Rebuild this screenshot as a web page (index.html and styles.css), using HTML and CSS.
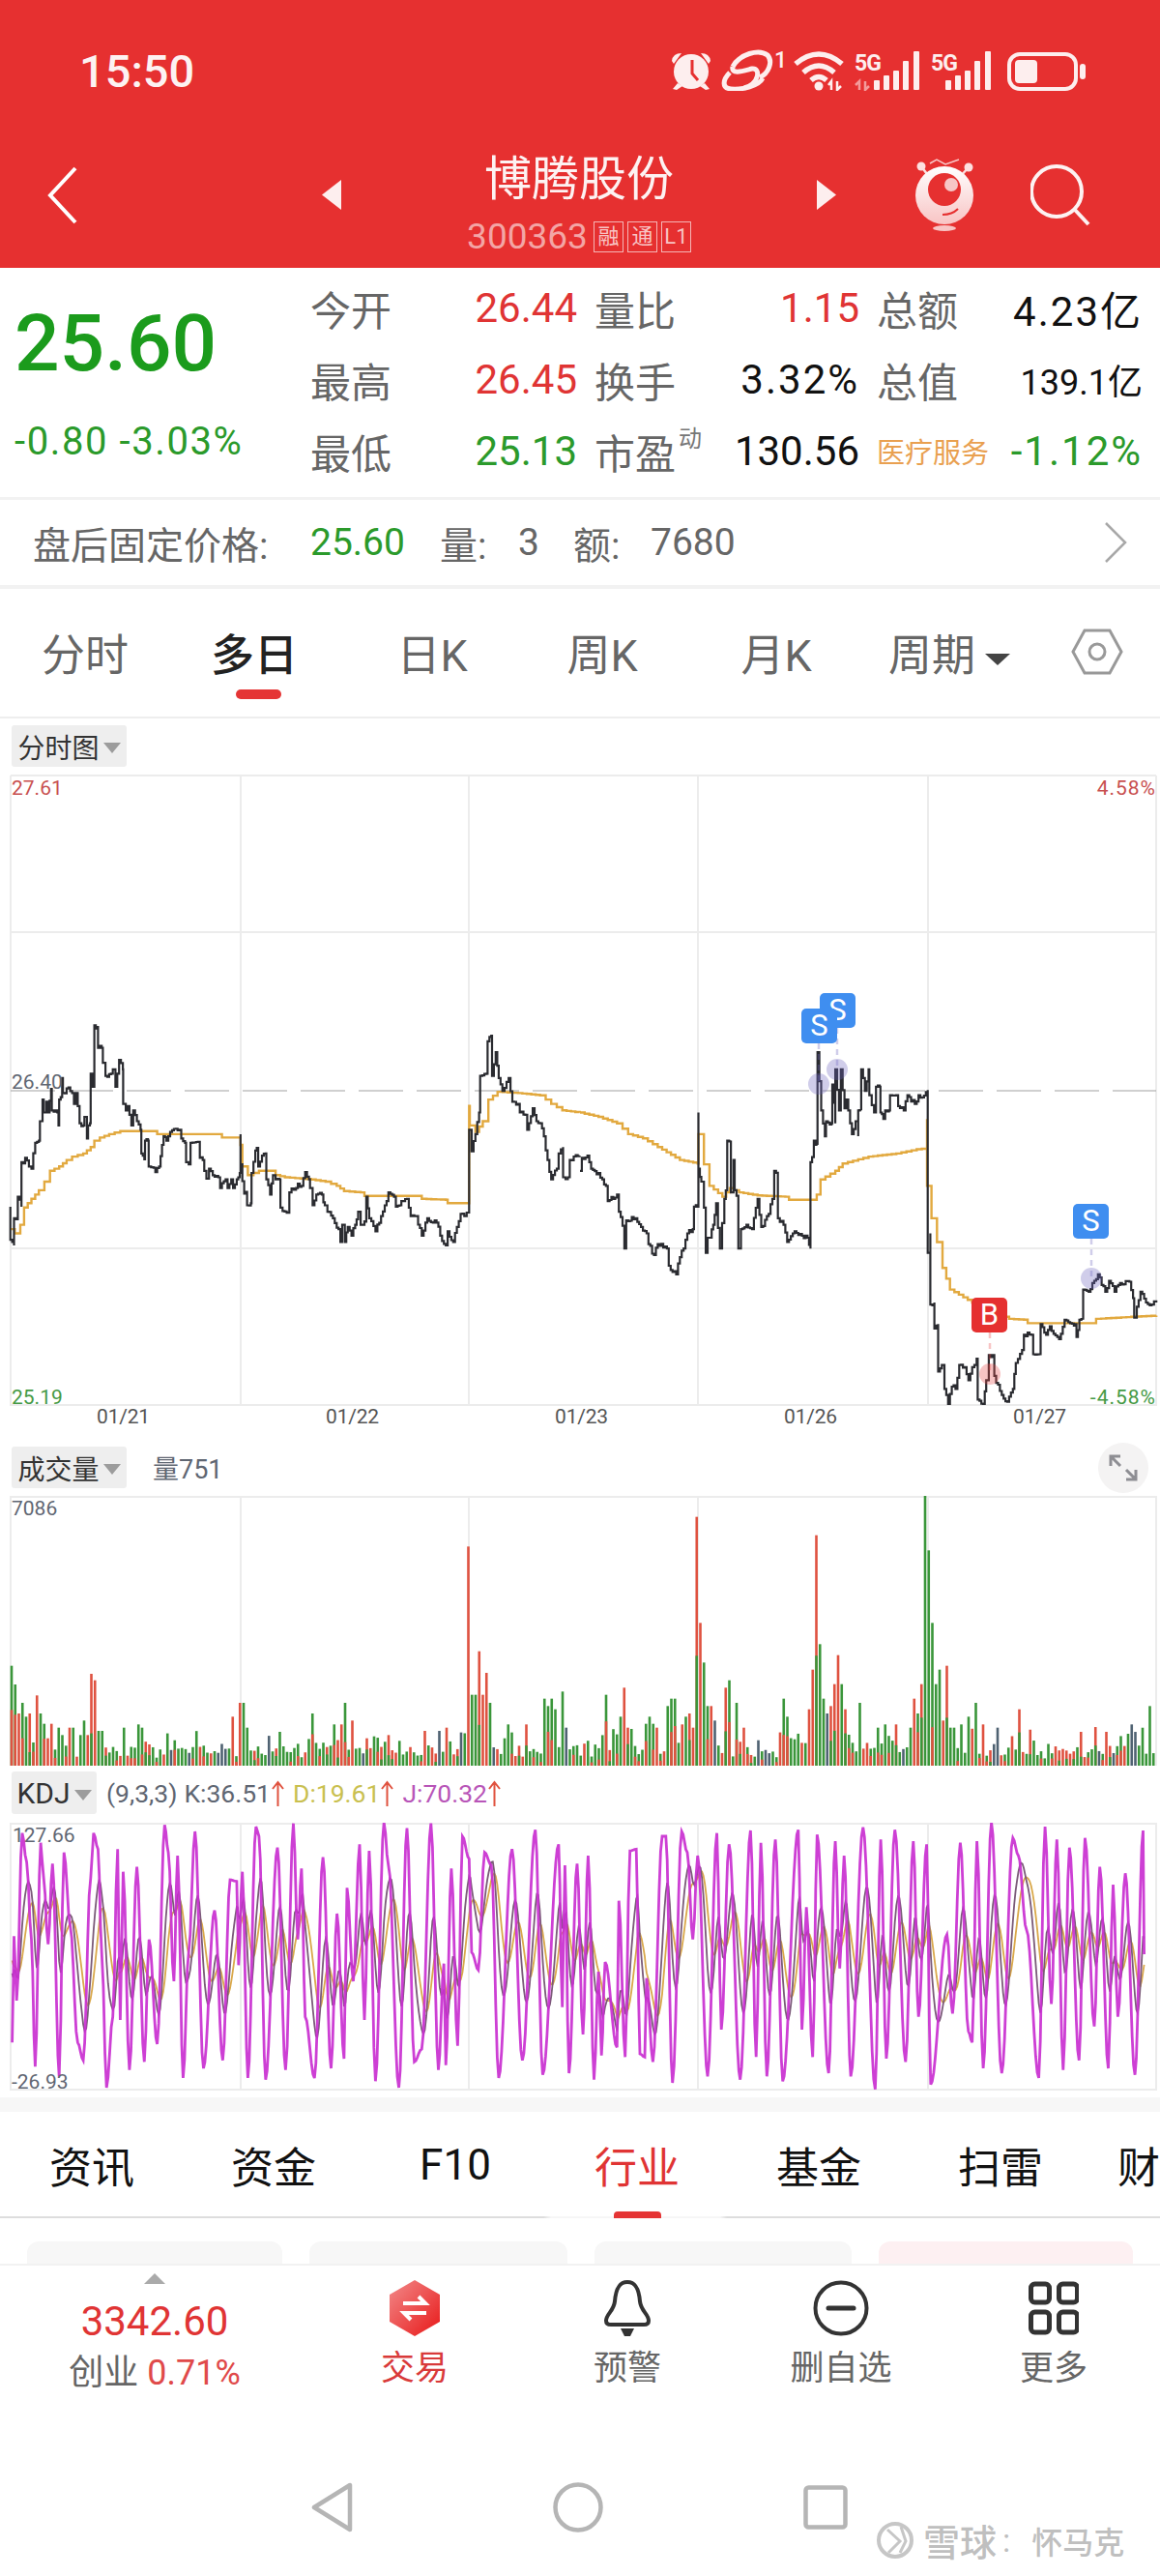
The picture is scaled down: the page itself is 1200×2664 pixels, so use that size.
FILE: index.html
```html
<!DOCTYPE html>
<html lang="zh-CN">
<head>
  <meta charset="UTF-8">
  <meta name="viewport" content="width=device-width, initial-scale=1.0">
  <title>博腾股份</title>
  <link rel="stylesheet" href="styles.css">
</head>
<body>
  <div class="phone">
    <header class="top">
      <div class="status">
        <span class="clock">15:50</span>
        <svg class="status-icons" width="430" height="50" viewBox="695 44 430 50">
          <g fill="#fdeeee">
            <circle cx="715" cy="74" r="18"/>
            <path d="M695 63 Q696 55 705 55 L697 66Z M735 63 Q734 55 725 55 L733 66Z"/>
            <path d="M701 86 L696 92 L700 93 L706 89Z M729 86 L734 92 L730 93 L724 89Z"/>
          </g>
          <path d="M716 62 V76 L722 83" fill="none" stroke="#e63030" stroke-width="3"/>
          <g fill="none" stroke="#fdeeee" stroke-width="5">
            <path d="M758 69 C765 56 785 50 794 57 C800 64 795 76 786 80"/>
            <path d="M755 75 C748 82 746 91 756 92 C768 93 785 89 789 81"/>
            <path d="M758 69 C756 78 770 73 778 71 C787 70 786 86 770 91"/>
          </g>
          <text class="status-sup" x="801" y="70">1</text>
          <g fill="none" stroke="#fdeeee" stroke-width="5.5">
            <path d="M823 66 Q847 46 871 66"/>
            <path d="M831 75 Q847 61 863 75"/>
            <path d="M839 83 Q847 76 855 83"/>
          </g>
          <circle cx="847" cy="89" r="4.5" fill="#fdeeee"/>
          <path d="M860 93 V84 L857 88 M866 84 V93 L870 89" fill="none" stroke="#fdeeee" stroke-width="2.5"/>
          <text class="status-5g" x="884" y="73">5G</text>
          <path d="M889 93 V84 L885 88 M895 84 V93 L899 89" fill="none" stroke="#f39a9a" stroke-width="2.5"/>
          <g fill="#fdeeee">
            <rect x="904" y="83" width="6" height="10" rx="1"/>
            <rect x="914" y="78" width="6" height="15" rx="1"/>
            <rect x="924" y="73" width="6" height="20" rx="1"/>
            <rect x="934" y="63" width="6" height="30" rx="1"/>
            <rect x="945" y="53" width="6" height="40" rx="1"/>
          </g>
          <text class="status-5g" x="963" y="73">5G</text>
          <g fill="#fdeeee">
            <rect x="978" y="83" width="6" height="10" rx="1"/>
            <rect x="988" y="78" width="6" height="15" rx="1"/>
            <rect x="998" y="73" width="6" height="20" rx="1"/>
            <rect x="1008" y="63" width="6" height="30" rx="1"/>
            <rect x="1019" y="53" width="6" height="40" rx="1"/>
          </g>
          <rect x="1044" y="56" width="69" height="36" rx="11" fill="none" stroke="#fdeeee" stroke-width="4"/>
          <rect x="1050" y="62" width="23" height="24" rx="4" fill="#fdeeee"/>
          <rect x="1117" y="66" width="6" height="16" rx="3" fill="#fdeeee"/>
        </svg>
      </div>
      <div class="titlebar">
        <svg class="back" width="31" height="60" viewBox="0 0 31 60"><path d="M29 2 L3 30 L29 58" fill="none" stroke="#fff" stroke-width="4"/></svg>
        <svg class="tri-left" width="20" height="31" viewBox="0 0 20 31"><path d="M20 0 V31 L0 15.5Z" fill="#fdeeee"/></svg>
        <div class="stock">
          <div class="stock-name">博腾股份</div>
          <div class="stock-code">
            <span>300363</span>
            <i class="tag">融</i><i class="tag">通</i><i class="tag">L1</i>
          </div>
        </div>
        <svg class="tri-right" width="20" height="31" viewBox="0 0 20 31"><path d="M0 0 V31 L20 15.5Z" fill="#fdeeee"/></svg>
        <svg class="robot" width="60" height="76" viewBox="947 163 60 76">
          <defs>
            <linearGradient id="robotFill" x1="0" y1="0" x2="0" y2="1">
              <stop offset="0" stop-color="#fff"/>
              <stop offset="1" stop-color="#f8c4c4"/>
            </linearGradient>
          </defs>
          <path d="M962 169 L969 165 L978 170 L992 165" fill="none" stroke="#f9c9c9" stroke-width="1.5"/>
          <path d="M953 172 L962 184 M1002 173 L992 184" stroke="#fde0e0" stroke-width="2.5"/>
          <circle cx="953" cy="172" r="4.5" fill="#fde0e0"/>
          <circle cx="1002" cy="173" r="4.5" fill="#fde0e0"/>
          <circle cx="977" cy="202" r="30" fill="url(#robotFill)"/>
          <circle cx="977" cy="196" r="17" fill="#e63030"/>
          <circle cx="984" cy="191" r="7" fill="#f7c6c6"/>
          <path d="M975 222 Q985 222 991 216" fill="none" stroke="#e63030" stroke-width="2"/>
          <ellipse cx="977" cy="236" rx="12" ry="3" fill="#f8c4c4"/>
        </svg>
        <svg class="search" width="62" height="64" viewBox="1066 170 62 64">
          <circle cx="1093" cy="198" r="26" fill="none" stroke="#fdf2f2" stroke-width="4"/>
          <path d="M1112 217 L1126 232" stroke="#fdf2f2" stroke-width="4"/>
        </svg>
      </div>
    </header>

    <section class="quote">
      <div class="quote-left">
        <div class="price">25.60</div>
        <div class="change">-0.80 -3.03%</div>
      </div>
      <div class="quote-grid">
        <span class="lbl">今开</span><span class="val red">26.44</span>
        <span class="lbl lbl-pad">量比</span><span class="val red">1.15</span>
        <span class="lbl lbl-pad">总额</span><span class="val val-wide">4.23亿</span>

        <span class="lbl">最高</span><span class="val red">26.45</span>
        <span class="lbl lbl-pad">换手</span><span class="val val-wide">3.32%</span>
        <span class="lbl lbl-pad">总值</span><span class="val val-sm">139.1亿</span>

        <span class="lbl">最低</span><span class="val green">25.13</span>
        <span class="lbl lbl-pad">市盈<sup class="sup">动</sup></span><span class="val">130.56</span>
        <span class="lbl lbl-pad sector">医疗服务</span><span class="val val-wide green">-1.12%</span>
      </div>
    </section>

    <section class="afterhours">
      <span class="ah-title">盘后固定价格:</span>
      <span class="ah-price">25.60</span>
      <span class="ah-vol">量:</span>
      <span class="ah-num">3</span>
      <span class="ah-amt">额:</span>
      <span class="ah-num ah-sum">7680</span>
      <svg class="ah-arrow" width="24" height="42" viewBox="0 0 24 42"><path d="M2 1 L22 21 L2 41" fill="none" stroke="#a8a8a8" stroke-width="2.5"/></svg>
    </section>

    <nav class="period">
      <span>分时</span>
      <span class="period-on">多日</span>
      <span>日K</span>
      <span>周K</span>
      <span>月K</span>
      <span class="period-more">周期<i class="caret-dark"></i></span>
      <svg class="gear" width="54" height="48" viewBox="0 0 54 48">
        <path d="M14 2 H40 L52 24 L40 46 H14 L2 24Z" fill="none" stroke="#999" stroke-width="3"/>
        <circle cx="27" cy="24" r="8" fill="none" stroke="#999" stroke-width="3"/>
      </svg>
    </nav>

    <div class="chart-head chart-head-price">
      <span class="badge">分时图<i class="caret"></i></span>
    </div>
    <div class="chart chart-price">
      <svg id="priceChart" width="1200" height="653" viewBox="0 801 1200 653"></svg>
      <span class="axis axis-tl up">27.61</span>
      <span class="axis axis-ml">26.40</span>
      <span class="axis axis-bl down">25.19</span>
      <span class="axis axis-tr up">4.58%</span>
      <span class="axis axis-br down">-4.58%</span>
    </div>
    <div class="dates">
      <span>01/21</span><span>01/22</span><span>01/23</span><span>01/26</span><span>01/27</span>
    </div>

    <div class="chart-head chart-head-vol">
      <span class="badge">成交量<i class="caret"></i></span>
      <span class="vol-now">量751</span>
      <svg class="expand" width="52" height="52" viewBox="0 0 52 52">
        <circle cx="26" cy="26" r="26" fill="#f4f3f3"/>
        <path d="M13 14 L23 24 M13 24 V14 H23 M39 38 L29 28 M39 28 V38 H29" fill="none" stroke="#8e8e93" stroke-width="3"/>
      </svg>
    </div>
    <div class="chart chart-vol">
      <svg id="volChart" width="1200" height="279" viewBox="0 1548 1200 279"></svg>
      <span class="axis axis-max">7086</span>
    </div>

    <div class="chart-head chart-head-kdj">
      <span class="badge badge-kdj">KDJ<i class="caret"></i></span>
      <span class="kdj-vals">
        <span class="kdj-p">(9,3,3)</span>
        <span class="kdj-item">K:36.51<svg class="up-arrow" width="13" height="27" viewBox="0 0 13 27"><path d="M6.5 27 V2 M1 9 L6.5 2 L12 9" fill="none" stroke="#e0523f" stroke-width="2"/></svg></span>
        <span class="kdj-item kdj-d">D:19.61<svg class="up-arrow" width="13" height="27" viewBox="0 0 13 27"><path d="M6.5 27 V2 M1 9 L6.5 2 L12 9" fill="none" stroke="#e0523f" stroke-width="2"/></svg></span>
        <span class="kdj-item kdj-j">J:70.32<svg class="up-arrow" width="13" height="27" viewBox="0 0 13 27"><path d="M6.5 27 V2 M1 9 L6.5 2 L12 9" fill="none" stroke="#e0523f" stroke-width="2"/></svg></span>
      </span>
    </div>
    <div class="chart chart-kdj">
      <svg id="kdjChart" width="1200" height="277" viewBox="0 1886 1200 277"></svg>
      <span class="axis axis-kdj-top">127.66</span>
      <span class="axis axis-kdj-bot">-26.93</span>
    </div>

    <div class="band"></div>

    <nav class="info-tabs">
      <span>资讯</span>
      <span>资金</span>
      <span>F10</span>
      <span class="info-on">行业</span>
      <span>基金</span>
      <span>扫雷</span>
      <span class="info-last">财</span>
    </nav>

    <div class="cards">
      <div class="card"></div>
      <div class="card"></div>
      <div class="card"></div>
      <div class="card card-pink"></div>
    </div>

    <footer class="toolbar">
      <div class="index">
        <i class="index-up"></i>
        <div class="index-num">3342.60</div>
        <div class="index-sub">创业 <em>0.71%</em></div>
      </div>
      <div class="tool tool-on">
        <svg width="52" height="58" viewBox="0 0 52 58">
          <defs>
            <linearGradient id="tradeFill" x1="0" y1="0" x2="1" y2="1">
              <stop offset="0" stop-color="#f28a8a"/>
              <stop offset="1" stop-color="#e81818"/>
            </linearGradient>
          </defs>
          <path d="M26 0 L52 15 V43 L26 58 L0 43 V15Z" fill="url(#tradeFill)"/>
          <path d="M14 24 H37 L30 17 M38 34 H15 L22 41" fill="none" stroke="#fff" stroke-width="4"/>
        </svg>
        <span>交易</span>
      </div>
      <div class="tool">
        <svg width="52" height="58" viewBox="0 0 52 58">
          <path d="M26 2 C17 2 14 10 13 22 C12 32 4 35 4 42 C4 45 6 46 9 46 H43 C46 46 48 45 48 42 C48 35 40 32 39 22 C38 10 35 2 26 2Z" fill="none" stroke="#333" stroke-width="4"/>
          <path d="M19 50 H33 L29 58 H23Z" fill="#333"/>
        </svg>
        <span>预警</span>
      </div>
      <div class="tool">
        <svg width="58" height="58" viewBox="0 0 58 58">
          <circle cx="29" cy="29" r="26.5" fill="none" stroke="#333" stroke-width="4"/>
          <path d="M16 29 H42" stroke="#333" stroke-width="5" stroke-linecap="round"/>
        </svg>
        <span>删自选</span>
      </div>
      <div class="tool">
        <svg width="52" height="58" viewBox="0 0 52 58">
          <g fill="none" stroke="#333" stroke-width="5">
            <rect x="2.5" y="4" width="19" height="19" rx="4"/>
            <rect x="31.5" y="4" width="19" height="19" rx="4"/>
            <rect x="2.5" y="33" width="19" height="21" rx="4"/>
            <rect x="31.5" y="33" width="19" height="21" rx="4"/>
          </g>
        </svg>
        <span>更多</span>
      </div>
    </footer>

    <div class="sysnav">
      <svg width="43" height="52" viewBox="0 0 43 52"><path d="M40 3 V49 L3 26Z" fill="none" stroke="#b5b5b5" stroke-width="4.5" stroke-linejoin="round"/></svg>
      <svg width="52" height="52" viewBox="0 0 52 52"><circle cx="26" cy="26" r="23.5" fill="none" stroke="#b5b5b5" stroke-width="4.5"/></svg>
      <svg width="46" height="46" viewBox="0 0 46 46"><rect x="2.5" y="2.5" width="41" height="41" rx="3" fill="none" stroke="#b5b5b5" stroke-width="4.5"/></svg>
    </div>

    <div class="watermark">
      <svg width="40" height="40" viewBox="0 0 40 40">
        <circle cx="20" cy="20" r="17" fill="none" stroke="#c6c6c6" stroke-width="4"/>
        <path d="M12 9 L25 21 L13 33 M26 6 L31 21 L25 33" fill="none" stroke="#c6c6c6" stroke-width="3"/>
      </svg>
      <span class="wm-site">雪球</span>
      <span class="wm-colon">:</span>
      <span class="wm-user">怀马克</span>
    </div>
  </div>
  <script src="chart.js"></script>
</body>
</html>
```

FILE: styles.css
```css
* {
  box-sizing: border-box;
}

body {
  margin: 0;
  background: #fff;
  font-family: Roboto, "Noto Sans CJK SC", sans-serif;
  color: #111;
}

i, em {
  font-style: normal;
}

.phone {
  position: relative;
  width: 1200px;
  height: 2664px;
  overflow: hidden;
  background: #fff;
}

/* red header */
.top {
  height: 277px;
  background: #e63030;
  color: #fff;
}

.status {
  display: flex;
  align-items: center;
  justify-content: space-between;
  height: 146px;
  padding: 0 75px 0 82px;
}

.status-icons {
  margin-bottom: 8px;
}

.clock {
  font-size: 47px;
  font-weight: 500;
  color: #fdf2f2;
}

.status-5g {
  font-family: Roboto, sans-serif;
  font-size: 23px;
  font-weight: 700;
  fill: #fdeeee;
  letter-spacing: -1px;
}

.status-sup {
  font-family: Roboto, sans-serif;
  font-size: 23px;
  font-weight: 500;
  fill: #fdeeee;
}

.titlebar {
  display: flex;
  align-items: flex-start;
  height: 131px;
}

.back {
  margin: 26px 0 0 49px;
}

.tri-left {
  margin: 40px 0 0 253px;
}

.stock {
  width: 492px;
  margin-top: 12px;
  text-align: center;
}

.stock-name {
  font-size: 49px;
  line-height: 56px;
  color: #fdf2f2;
}

.stock-code {
  display: flex;
  align-items: center;
  justify-content: center;
  gap: 4px;
  margin-top: 14px;
  font-size: 37px;
  line-height: 34px;
  color: #f3a5a5;
}

.stock-code span {
  margin-right: 2px;
}

.tag {
  width: 31px;
  height: 32px;
  border: 1px solid #f5b5b5;
  font-size: 22px;
  line-height: 30px;
  color: #f8c4c4;
}

.tri-right {
  margin-top: 40px;
}

.robot {
  margin: 17px 0 0 82px;
}

.search {
  margin: 24px 0 0 59px;
}

/* quote block */
.quote {
  display: flex;
  height: 240px;
  border-bottom: 3px solid #f2f2f2;
}

.quote-left {
  width: 321px;
  padding-left: 15px;
}

.price {
  margin-top: 28px;
  font-size: 82px;
  font-weight: 500;
  line-height: 100px;
  color: #1b9b1c;
}

.change {
  margin-top: 30px;
  font-size: 40px;
  line-height: 44px;
  letter-spacing: 1.6px;
  color: #2b9a2b;
}

.quote-grid {
  display: grid;
  grid-template-columns: 85px 191px 101px 191px 102px 191px;
  grid-auto-rows: 74px;
  padding-top: 4px;
  align-items: center;
}

.lbl {
  position: relative;
  font-size: 42px;
  color: #666;
  white-space: nowrap;
}

.lbl-pad {
  padding-left: 18px;
}

.sup {
  position: absolute;
  top: 6px;
  left: 105px;
  font-size: 24px;
  line-height: 24px;
  color: #777;
}

.sector {
  font-size: 29px;
  color: #e9a050;
}

.val {
  text-align: right;
  font-size: 42px;
  color: #111;
}

.val-wide {
  letter-spacing: 2px;
}

.val-sm {
  font-size: 36px;
}

.val.red {
  color: #e03434;
}

.val.green {
  color: #2b9a2b;
}

/* after hours row */
.afterhours {
  display: flex;
  align-items: center;
  height: 92px;
  padding-left: 34px;
  border-bottom: 4px solid #f2f2f2;
  font-size: 39px;
  color: #666;
}

.ah-title {
  width: 287px;
  white-space: nowrap;
}

.ah-price {
  width: 134px;
  color: #2b9a2b;
}

.ah-vol {
  width: 81px;
  white-space: nowrap;
}

.ah-num {
  width: 57px;
}

.ah-amt {
  width: 80px;
  white-space: nowrap;
}

.ah-sum {
  width: 469px;
}

/* period tabs */
.period {
  display: grid;
  grid-template-columns: 176px 174px 194px 158px 202px 156px 1fr;
  align-items: center;
  height: 134px;
  padding-bottom: 2px;
  border-bottom: 2px solid #eeeeee;
  font-size: 45px;
  color: #666;
  text-align: center;
}

.period-on {
  position: relative;
  font-weight: 500;
  color: #222;
}

.period-on::after {
  content: "";
  position: absolute;
  left: 68px;
  top: 71px;
  width: 47px;
  height: 10px;
  border-radius: 5px;
  background: #e53535;
}

.period-more {
  white-space: nowrap;
}

.caret-dark {
  display: inline-block;
  margin-left: 10px;
  vertical-align: 6px;
  border-left: 13px solid transparent;
  border-right: 13px solid transparent;
  border-top: 12px solid #444;
}

.gear {
  margin-left: 48px;
}

/* chart panels */
.chart-head {
  display: flex;
  align-items: center;
  padding-left: 12px;
}

.chart-head-price {
  margin-top: 7px;
  margin-bottom: 8px;
}

.chart-head-vol {
  position: relative;
  margin-bottom: 8px;
}

.chart-head-kdj {
  margin-top: 6px;
  margin-bottom: 9px;
}

.badge {
  display: flex;
  align-items: center;
  justify-content: center;
  width: 119px;
  height: 43px;
  border-radius: 3px;
  background: #eeeeee;
  font-size: 28px;
  color: #333;
}

.badge-kdj {
  width: 88px;
  height: 44px;
  font-size: 30px;
}

.caret {
  margin-left: 4px;
  margin-top: 4px;
  border-left: 9px solid transparent;
  border-right: 9px solid transparent;
  border-top: 11px solid #9c9c9c;
}

.chart {
  position: relative;
}

.chart svg {
  display: block;
}

.axis {
  position: absolute;
  font-size: 21px;
  line-height: 24px;
  color: #5f6672;
}

.up {
  color: #c85050;
}

.down {
  color: #459a45;
}

.axis-tl {
  top: 2px;
  left: 12px;
}

.axis-ml {
  top: 306px;
  left: 12px;
}

.axis-bl {
  top: 632px;
  left: 12px;
}

.axis-tr {
  top: 2px;
  right: 4px;
  letter-spacing: 1px;
}

.axis-br {
  top: 632px;
  right: 4px;
  letter-spacing: 1px;
}

.axis-max {
  top: 1px;
  left: 12px;
}

.axis-kdj-top {
  top: 1px;
  left: 13px;
}

.axis-kdj-bot {
  top: 256px;
  left: 12px;
}

.dates {
  display: grid;
  grid-template-columns: repeat(5, 237px);
  height: 42px;
  padding-left: 9px;
  font-size: 21px;
  line-height: 22px;
  letter-spacing: -0.2px;
  color: #555;
  text-align: center;
}

.vol-now {
  margin-left: 27px;
  font-size: 27px;
  color: #5f6672;
}

.expand {
  position: absolute;
  right: 12px;
  top: -4px;
}

.kdj-vals {
  display: flex;
  align-items: center;
  margin-left: 10px;
  font-size: 26.5px;
  color: #5f6672;
  white-space: nowrap;
}

.kdj-p {
  margin-right: 7px;
}

.kdj-item {
  display: flex;
  align-items: center;
}

.kdj-d {
  margin-left: 9px;
  color: #c9c050;
}

.kdj-j {
  margin-left: 9px;
  color: #b855b8;
}

.up-arrow {
  margin-left: 1px;
}

.band {
  height: 15px;
  margin-top: 7px;
  background: #f7f7f7;
}

/* info tabs */
.info-tabs {
  position: relative;
  display: flex;
  align-items: center;
  height: 110px;
  padding-left: 1px;
  overflow: hidden;
  background: linear-gradient(to right, #dddddd 562px, #f6f6f6 570px, #f6f6f6 745px, #dddddd 752px) bottom / 100% 2px no-repeat;
  font-size: 44px;
}

.info-tabs span {
  flex: 0 0 188px;
  text-align: center;
}

.info-tabs .info-last {
  flex: 0 0 44px;
  margin-left: 27px;
  text-align: left;
}

.info-on {
  position: relative;
  color: #e03434;
}

.info-on::after {
  content: "";
  position: absolute;
  left: 70px;
  top: 80px;
  width: 49px;
  height: 7px;
  border-radius: 4px 4px 0 0;
  background: #e53535;
}

.cards {
  display: grid;
  grid-template-columns: 264px 267px 266px 263px;
  column-gap: 28px;
  height: 47px;
  padding: 24px 0 0 28px;
  overflow: hidden;
}

.card {
  height: 23px;
  border-radius: 12px 12px 0 0;
  background: #f7f7f7;
}

.card-pink {
  background: #fdf0f2;
}

/* bottom toolbar */
.toolbar {
  display: grid;
  grid-template-columns: 320px 218px 222px 220px 220px;
  height: 226px;
  border-top: 2px solid #f2f2f2;
}

.index {
  padding-top: 8px;
  text-align: center;
}

.index-up {
  display: block;
  width: 0;
  margin: 0 auto;
  border-left: 11px solid transparent;
  border-right: 11px solid transparent;
  border-bottom: 11px solid #aaaaaa;
}

.index-num {
  margin-top: 17px;
  font-size: 42px;
  line-height: 44px;
  color: #e03434;
}

.index-sub {
  margin-top: 11px;
  font-size: 36px;
  line-height: 40px;
  color: #666;
}

.index-sub em {
  color: #e04a4a;
}

.tool {
  display: flex;
  flex-direction: column;
  align-items: center;
  padding-top: 15px;
  font-size: 35px;
  line-height: 40px;
  color: #666;
}

.tool span {
  margin-top: 14px;
}

.tool-on {
  color: #d93a3a;
}

.sysnav {
  display: flex;
  align-items: center;
  height: 52px;
  margin-top: 0;
  padding-left: 322px;
  gap: 207px;
}

/* site watermark over the nav bar */
.watermark {
  position: absolute;
  left: 906px;
  top: 2599px;
  display: flex;
  align-items: center;
  color: #bfbfbf;
  text-shadow: 0 0 2px #fff;
}

.wm-site {
  margin-left: 9px;
  font-size: 38px;
  font-weight: 500;
}

.wm-colon {
  margin: 0 22px 0 6px;
  font-size: 34px;
}

.wm-user {
  font-size: 32px;
  font-weight: 500;
}
```

FILE: chart.js
```js
const NS = 'http://www.w3.org/2000/svg';
const COLS = [11, 249, 485, 722, 960, 1196];

// small seeded generator so the picture is the same on every load
let seed = 20240127;
function rnd() {
  seed = (seed * 1664525 + 1013904223) % 4294967296;
  return seed / 4294967296;
}

function add(svg, tag, attrs, text) {
  const el = document.createElementNS(NS, tag);
  for (const k in attrs) el.setAttribute(k, attrs[k]);
  if (text) el.textContent = text;
  svg.appendChild(el);
  return el;
}

function grid(svg, top, bottom, rows) {
  const stroke = { stroke: '#ececec', 'stroke-width': 2 };
  COLS.forEach((x) => add(svg, 'line', { x1: x, x2: x, y1: top, y2: bottom, ...stroke }));
  rows.forEach((y) => add(svg, 'line', { x1: 11, x2: 1196, y1: y, y2: y, ...stroke }));
}

// points were read off two enlarged crops of the chart
function fromLeft(pts) {
  return pts.map(([x, y]) => [x / 2.613, 780 + y / 2.24]);
}

function fromRight(pts) {
  return pts.map(([x, y]) => [600 + x / 2.613, 780 + y / 2.24]);
}

function stairs(pts, step, jitter) {
  let d = `M${pts[0][0].toFixed(1)} ${pts[0][1].toFixed(1)}`;
  for (let i = 1; i < pts.length; i++) {
    const [x1, y1] = pts[i - 1];
    const [x2, y2] = pts[i];
    const n = Math.max(1, Math.round((x2 - x1) / step));
    for (let j = 1; j <= n; j++) {
      const x = x1 + ((x2 - x1) * j) / n;
      const y = y1 + ((y2 - y1) * j) / n + (j < n ? jitter * (rnd() - 0.5) : 0);
      d += `H${x.toFixed(1)}V${y.toFixed(1)}`;
    }
  }
  return d;
}

const priceLeft = fromLeft([
  [28,1048],[28,1125],[38,1138],[38,1075],[48,1075],[48,1025],[58,1048],[58,945],[68,945],[68,935],[78,955],[85,960],[95,900],[105,895],[108,850],[115,800],[118,830],[125,805],[130,830],[138,775],[140,825],[155,830],[158,860],[160,800],[168,790],[168,750],[170,785],[185,772],[195,785],[200,810],[205,785],[210,815],[215,855],[225,860],[228,840],[235,890],[238,860],[243,855],[245,740],[250,770],[255,628],[263,632],[265,680],[275,680],[278,715],[285,745],[300,740],[305,730],[312,770],[322,708],[332,730],[333,810],[340,825],[345,815],[350,835],[355,860],[360,825],[370,850],[380,870],[382,925],[390,938],[392,895],[400,895],[402,955],[415,958],[420,968],[430,955],[438,905],[442,885],[450,895],[460,875],[470,868],[485,870],[490,890],[500,900],[503,945],[510,950],[515,900],[535,898],[540,935],[548,940],[552,965],[558,983],[565,960],[575,975],[590,980],[595,1005],[610,985],[615,1005],[625,985],[630,1005],[640,985],[648,970],
  [650,880],[650,950],[660,1018],[668,1020],[668,1045],[678,1040],[680,970],[690,918],[698,915],[698,955],[708,930],[718,925],[720,985],[730,1020],[738,975],[745,985],[755,985],[758,1050],[775,1062],[782,1015],[800,1005],[805,995],[815,1000],[825,968],[835,985],[838,1005],[845,1045],[855,1020],[870,1020],[878,1045],[885,1060],[900,1075],[915,1100],[920,1130],[925,1090],[932,1130],[940,1095],[950,1115],[960,1090],[968,1060],[975,1090],[990,1085],[990,1025],[998,1075],[1015,1105],[1030,1070],[1040,1045],[1050,1015],[1065,1025],[1070,1048],[1090,1035],[1100,1030],[1110,1070],[1125,1070],[1140,1115],[1155,1075],[1170,1085],[1180,1085],[1190,1115],[1205,1138],[1210,1105],[1225,1130],[1235,1095],[1245,1065],[1255,1070],[1268,1055],
  [1268,955],[1268,870],[1275,920],[1285,880],[1295,830],[1298,745],[1315,740],[1318,665],[1328,652],[1330,745],[1340,690],[1348,750],[1358,780],[1375,750],[1385,805],[1400,810],[1405,830],[1420,835],[1425,870],[1440,820],[1450,850],[1460,855],[1470,885],[1480,940],[1490,985],[1505,960],[1510,925],[1522,910],[1522,980],[1535,980],[1540,940],[1567,930]
]);

const priceRight = fromRight([
  [0,965],[5,935],[20,930],[30,960],[50,970],[70,1000],[75,1035],[100,1020],[105,1060],[120,1105],[120,1145],[125,1080],[150,1075],[165,1095],[180,1110],[185,1135],[200,1160],[210,1135],[235,1145],[240,1185],[260,1205],[270,1165],[280,1145],[290,1110],[305,1100],[308,1048],[318,1048],
  [320,830],[320,960],[328,990],[335,1050],[340,1155],[345,1120],[352,1120],[360,1090],[368,1040],[378,1145],[390,1030],[398,1000],[398,895],[408,895],[408,1015],[415,940],[418,1010],[428,1040],[428,1145],[435,1100],[450,1090],[465,1100],[480,1030],[490,1095],[510,1065],[520,1030],[525,965],[535,980],[535,1075],[550,1090],[560,1130],[580,1105],[600,1115],[615,1120],[623,1145],[623,945],[632,925],[632,895],[642,905],[642,690],[652,825],[662,885],[665,850],[680,855],[682,765],[690,855],[690,730],[700,825],[705,730],[715,820],[720,800],[730,855],[735,880],[745,850],[752,885],[752,825],[760,825],[760,730],[770,780],[780,730],[782,790],[795,830],[800,770],[810,770],[812,830],[820,845],[825,825],[835,825],[838,790],[855,790],[860,815],[875,825],[885,790],[905,810],[915,790],[925,795],[940,778],
  [940,985],[940,1155],[947,1110],[947,1275],[958,1270],[958,1330],[968,1320],[968,1430],[978,1415],[985,1470],[995,1505],[1005,1465],[1015,1470],[1025,1415],[1040,1420],[1050,1450],[1060,1420],[1072,1400],[1075,1495],[1090,1505],[1098,1450],[1105,1392],[1115,1392],[1120,1440],[1135,1475],[1155,1500],[1170,1470],[1178,1410],[1195,1380],[1200,1345],[1220,1345],[1225,1390],[1240,1390],[1245,1320],[1260,1345],[1270,1325],[1295,1355],[1310,1310],[1340,1320],[1342,1350],[1350,1310],[1360,1310],[1360,1240],[1375,1245],[1385,1225],[1400,1205],[1420,1245],[1430,1220],[1445,1245],[1460,1225],[1485,1222],[1495,1260],[1498,1305],[1505,1280],[1515,1245],[1530,1270],[1545,1275],[1558,1265]
]);

const avgLeft = fromLeft([
  [28,1100],[40,1110],[55,1090],[65,1050],[85,1030],[105,1010],[120,990],[135,965],[160,955],[180,940],[195,932],[225,925],[245,910],[255,895],[270,888],[295,880],[325,873],[420,873],[425,880],[590,880],[600,888],[650,888],
  [650,905],[655,955],[670,975],[700,965],[735,965],[745,975],[770,980],[840,985],[880,990],[910,1000],[930,1012],[975,1015],[985,1023],[1135,1023],[1140,1030],[1205,1032],[1210,1040],[1268,1040],
  [1268,815],[1270,860],[1285,875],[1305,850],[1320,800],[1345,782],[1400,785],[1460,790],[1490,810],[1520,825],[1567,830]
]);

const avgRight = fromRight([
  [0,830],[50,840],[100,855],[130,880],[170,890],[210,910],[270,940],[318,948],
  [320,880],[335,950],[350,1000],[385,1025],[405,1005],[430,1015],[480,1022],[555,1025],[565,1032],[630,1032],[640,1020],[650,985],[690,965],[710,948],[780,932],[855,925],[910,915],[938,913],
  [938,845],[938,1000],[950,1075],[965,1130],[980,1190],[1000,1240],[1060,1270],[1160,1308],[1200,1310],[1210,1318],[1380,1318],[1395,1308],[1558,1300]
]);

function marker(svg, x, y, dotX, dotY, label, fill, dot) {
  add(svg, 'circle', { cx: dotX, cy: dotY, r: 11, fill: dot });
  add(svg, 'line', {
    x1: dotX, x2: dotX, y1: y + 36, y2: dotY, stroke: dot, 'stroke-width': 2.5,
    'stroke-dasharray': '6 5'
  });
  add(svg, 'rect', { x, y, width: 37, height: 36, rx: 5, fill });
  add(svg, 'text', {
    x: x + 18.5, y: y + 28, 'text-anchor': 'middle', fill: '#fff',
    'font-family': 'Roboto, sans-serif', 'font-size': 31
  }, label);
}

function drawPrice() {
  const svg = document.getElementById('priceChart');
  grid(svg, 802, 1454, [802, 964, 1291, 1453]);
  add(svg, 'line', {
    x1: 11, x2: 1196, y1: 1128, y2: 1128, stroke: '#a0a0a0', 'stroke-width': 1,
    'stroke-dasharray': '46 14'
  });
  [avgLeft, avgRight].forEach((pts) => {
    add(svg, 'path', { d: stairs(pts, 5, 0), fill: 'none', stroke: '#e2a93f', 'stroke-width': 2.4 });
  });
  [priceLeft, priceRight].forEach((pts) => {
    add(svg, 'path', { d: stairs(pts, 2, 5), fill: 'none', stroke: '#2a2b30', 'stroke-width': 2.2 });
  });
  marker(svg, 848, 1027, 866, 1106, 'S', '#3f8ef0', 'rgba(110,100,190,.32)');
  marker(svg, 829, 1043, 847, 1121, 'S', '#3f8ef0', 'rgba(110,100,190,.32)');
  marker(svg, 1110, 1245, 1129, 1322, 'S', '#3f8ef0', 'rgba(110,100,190,.32)');
  marker(svg, 1005, 1342, 1024, 1421, 'B', '#e53030', 'rgba(230,70,70,.32)');
}

// [x in crop, top in crop, colour], only the bars that stand out
const volLeft = [
  [28,730,'g'],[38,788,'g'],[48,878,'r'],[58,845,'g'],[68,888,'g'],[78,878,'r'],[88,968,'g'],[97,822,'r'],[107,878,'g'],[117,910,'g'],[127,955,'r'],[137,910,'r'],[147,990,'g'],[156,922,'g'],[166,945,'g'],[176,978,'g'],[186,922,'r'],[195,922,'g'],[205,1012,'r'],[215,945,'g'],[225,900,'g'],[235,945,'r'],[244,755,'r'],[254,775,'r'],[264,932,'g'],[274,932,'g'],[333,922,'g'],[372,912,'g'],[382,922,'g'],
  [627,888,'r'],[647,845,'r'],[656,845,'g'],[665,922,'g'],[755,935,'g'],[842,878,'g'],[901,912,'g'],[921,912,'r'],[931,845,'g'],[950,900,'r'],[989,955,'r'],[1048,945,'r'],[1147,932,'r'],[1187,932,'s'],[1205,922,'r'],
  [1263,360,'r'],[1273,820,'g'],[1283,820,'g'],[1293,685,'r'],[1303,820,'r'],[1313,752,'r'],[1323,845,'g'],[1372,912,'g'],[1420,912,'r'],[1469,832,'g'],[1479,855,'g'],[1489,832,'g'],[1499,865,'g'],[1518,810,'g'],[1528,922,'s']
];

const volRight = [
  [68,820,'g'],[108,888,'g'],[117,798,'r'],[127,922,'r'],[176,910,'g'],[186,888,'g'],[196,910,'g'],[206,922,'r'],[235,855,'g'],[245,832,'g'],[254,832,'g'],[274,912,'r'],[284,888,'g'],[294,878,'r'],[304,922,'r'],[313,268,'r'],[323,597,'r'],[333,720,'g'],[343,855,'g'],[352,855,'r'],[362,900,'s'],[392,798,'r'],[401,775,'g'],[421,845,'g'],[441,922,'r'],[548,832,'g'],[558,888,'g'],[616,865,'r'],[627,742,'r'],[637,325,'r'],[646,663,'g'],[656,832,'g'],[666,878,'s'],[676,855,'r'],[686,787,'r'],[695,697,'r'],[705,787,'g'],[715,865,'r'],[755,845,'g'],[804,922,'g'],[823,912,'g'],[853,912,'r'],[892,922,'g'],[901,832,'r'],[911,878,'g'],[921,787,'r'],[931,203,'g'],[941,372,'g'],[950,597,'g'],[960,787,'g'],[970,742,'g'],[980,900,'r'],[990,730,'r'],[1000,922,'g'],[1009,922,'g'],[1029,912,'g'],[1049,888,'g'],[1068,845,'g'],[1088,912,'r'],[1127,922,'s'],[1186,865,'r'],[1352,935,'r'],[1420,935,'r'],[1489,912,'s'],[1538,855,'g']
];

function drawVolume() {
  const svg = document.getElementById('volChart');
  const colors = { g: '#3a963a', r: '#df5240', s: '#4f6272' };
  grid(svg, 1548, 1827, [1549]);
  const count = 316;
  const bars = [];
  for (let i = 0; i < count; i++) {
    const r = rnd();
    bars.push({ h: 7 + rnd() * rnd() * 30 + rnd() * 8, c: r < 0.58 ? 'g' : r < 0.9 ? 'r' : 's' });
  }
  const put = (x, top, c) => {
    const i = Math.round((x - 10.7) / 3.75);
    if (bars[i]) bars[i] = { h: (1040 - top) / 3, c };
  };
  volLeft.forEach(([x, top, c]) => put(x / 2.613, top, c));
  volRight.forEach(([x, top, c]) => put(600 + x / 2.613, top, c));
  bars.forEach((b, i) => {
    const x = 10.7 + i * 3.75;
    add(svg, 'rect', { x, y: 1827 - b.h, width: 2.6, height: b.h, fill: colors[b.c] });
    // the shorter lower part often shows the other colour
    if (b.c !== 's' && rnd() < 0.4) {
      const h = b.h * (0.25 + rnd() * 0.4);
      add(svg, 'rect', { x, y: 1827 - h, width: 2.6, height: h, fill: b.c === 'g' ? colors.r : colors.g });
    }
  });
}

// J line turning points, read off the crops (y scale is 3x)
const jLeft = [
  [33,880],[38,550],[45,750],[60,230],[72,320],[85,560],[95,955],[110,260],[118,370],[130,575],[142,325],[160,985],[173,290],[190,520],[210,880],[225,935],[245,370],[253,230],[265,280],[275,600],[288,1020],[305,800],[318,280],[325,810],[333,350],[350,965],[370,335],[390,940],[403,560],[425,885],[445,205],[455,290],[470,690],[480,300],[495,990],[510,600],[527,225],[550,960],[580,470],[602,935],[622,375],[640,380],[645,640],[655,350],[670,990],[692,210],[700,240],[718,995],[750,275],[772,965],[793,200],[805,560],[815,340],[825,800],[850,990],[873,305],[895,960],[911,480],[930,930],[938,400],[955,690],[972,265],[985,810],[998,285],[1015,1000],[1038,197],[1050,330],[1078,1020],[1100,215],[1120,940],[1140,900],[1165,200],[1185,965],[1200,635],[1205,950],[1220,340],[1237,890],[1250,240],[1268,310],[1275,600],[1293,655],[1310,290],[1328,330],[1348,990],[1384,280],[1412,935],[1447,220],[1467,980],[1510,265],[1520,770],[1527,330],[1538,975],[1560,325]
];

const jRight = [
  [8,855],[22,300],[38,995],[50,660],[58,920],[68,630],[100,895],[105,440],[122,925],[135,285],[152,280],[162,915],[175,925],[180,680],[197,940],[222,240],[232,240],[250,1005],[275,225],[290,290],[305,560],[318,300],[345,985],[370,230],[382,840],[403,265],[433,995],[461,222],[476,925],[489,260],[505,985],[528,250],[548,1000],[590,220],[600,840],[612,460],[629,925],[641,235],[672,975],[690,255],[702,650],[714,300],[732,985],[765,212],[798,1025],[813,250],[828,930],[851,220],[880,940],[901,255],[915,800],[937,265],[948,1010],[992,545],[1007,790],[1028,260],[1050,845],[1060,880],[1073,255],[1090,960],[1112,197],[1140,975],[1170,245],[1185,300],[1207,530],[1240,990],[1257,210],[1274,760],[1289,250],[1306,965],[1323,275],[1349,935],[1365,245],[1390,830],[1405,335],[1428,960],[1441,390],[1454,800],[1474,355],[1500,980],[1522,222],[1528,990]
];

function toPath(pts) {
  return pts.map(([x, y], i) => `${i ? 'L' : 'M'}${x.toFixed(1)} ${y.toFixed(1)}`).join('');
}

function drawKdj() {
  const svg = document.getElementById('kdjChart');
  grid(svg, 1886, 2163, [1887, 2162]);
  const turns = jLeft.map(([x, y]) => [x / 2.613, 1820 + y / 3])
    .concat(jRight.map(([x, y]) => [600 + x / 2.613, 1820 + y / 3]));
  const j = [];
  for (let i = 1; i < turns.length; i++) {
    const [x1, y1] = turns[i - 1];
    const [x2, y2] = turns[i];
    const n = Math.max(2, Math.round((x2 - x1) / 1.5));
    for (let s = 0; s < n; s++) {
      const t = (1 - Math.cos((Math.PI * s) / n)) / 2;
      j.push([x1 + ((x2 - x1) * s) / n, y1 + (y2 - y1) * t]);
    }
  }
  // K and D follow J with more and more lag
  const mid = 2025;
  let kv = mid;
  let dv = mid;
  const k = [];
  const d = [];
  j.forEach(([x, y]) => {
    kv += (y - kv) * 0.14;
    dv += (kv - dv) * 0.2;
    k.push([x, mid + (kv - mid) * 1.35]);
    d.push([x, mid + (dv - mid) * 1.45]);
  });
  add(svg, 'path', { d: toPath(d), fill: 'none', stroke: '#d9a84a', 'stroke-width': 1.8 });
  add(svg, 'path', { d: toPath(k), fill: 'none', stroke: '#7a5a78', 'stroke-width': 1.8 });
  add(svg, 'path', { d: toPath(j), fill: 'none', stroke: '#c92fd0', 'stroke-width': 2.8, 'stroke-opacity': 0.92 });
}

drawPrice();
drawVolume();
drawKdj();
```
